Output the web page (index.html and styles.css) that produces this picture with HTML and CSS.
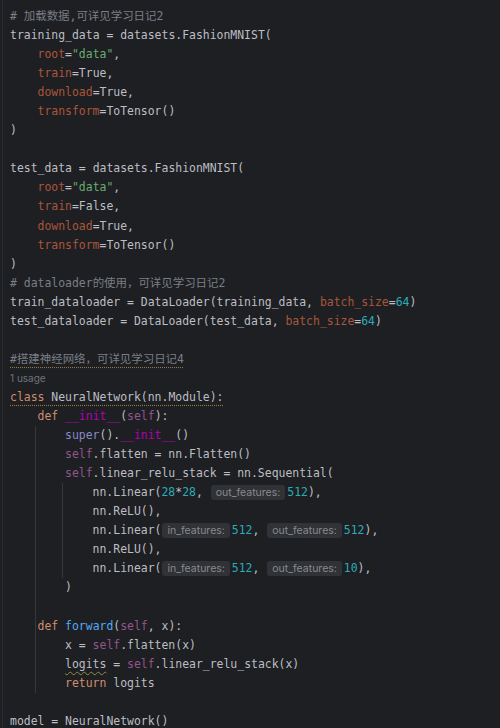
FILE: index.html
```html
<!DOCTYPE html>
<html lang="zh">
<head>
<meta charset="utf-8">
<link rel="stylesheet" href="styles.css">
</head>
<body>
<main class="editor">
<div class="ln"><span class="c"># 加载数据,可详见学习日记2</span></div>
<div class="ln">training_data = datasets.FashionMNIST(</div>
<div class="ln"><span class="i"></span><span class="n">root</span>=<span class="s">"data"</span>,</div>
<div class="ln"><span class="i"></span><span class="n">train</span>=True,</div>
<div class="ln"><span class="i"></span><span class="n">download</span>=True,</div>
<div class="ln"><span class="i"></span><span class="n">transform</span>=ToTensor()</div>
<div class="ln">)</div>
<div class="ln"></div>
<div class="ln">test_data = datasets.FashionMNIST(</div>
<div class="ln"><span class="i"></span><span class="n">root</span>=<span class="s">"data"</span>,</div>
<div class="ln"><span class="i"></span><span class="n">train</span>=False,</div>
<div class="ln"><span class="i"></span><span class="n">download</span>=True,</div>
<div class="ln"><span class="i"></span><span class="n">transform</span>=ToTensor()</div>
<div class="ln">)</div>
<div class="ln"><span class="c"># dataloader的使用，可详见学习日记2</span></div>
<div class="ln">train_dataloader = DataLoader(training_data, <span class="n">batch_size</span>=<span class="num">64</span>)</div>
<div class="ln">test_dataloader = DataLoader(test_data, <span class="n">batch_size</span>=<span class="num">64</span>)</div>
<div class="ln"></div>
<div class="ln"><span class="c warn">#搭建神经网络，可详见学习日记4</span></div>
<div class="ln usage">1 usage</div>
<div class="ln"><span class="warn"><span class="k">class</span> NeuralNetwork(nn.Module):</span></div>
<div class="ln"><span class="i"></span><span class="k">def</span> <span class="m">__init__</span>(<span class="sf">self</span>):</div>
<div class="ln"><span class="i g"></span><span class="i"></span><span class="b">super</span>().<span class="m">__init__</span>()</div>
<div class="ln"><span class="i g"></span><span class="i"></span><span class="sf">self</span>.flatten = nn.Flatten()</div>
<div class="ln"><span class="i g"></span><span class="i"></span><span class="sf">self</span>.linear_relu_stack = nn.Sequential(</div>
<div class="ln"><span class="i g"></span><span class="i g"></span><span class="i"></span>nn.Linear(<span class="num">28</span>*<span class="num">28</span>, <span class="h">out_features:</span><span class="num">512</span>),</div>
<div class="ln"><span class="i g"></span><span class="i g"></span><span class="i"></span>nn.ReLU(),</div>
<div class="ln"><span class="i g"></span><span class="i g"></span><span class="i"></span>nn.Linear(<span class="h">in_features:</span><span class="num">512</span>, <span class="h">out_features:</span><span class="num">512</span>),</div>
<div class="ln"><span class="i g"></span><span class="i g"></span><span class="i"></span>nn.ReLU(),</div>
<div class="ln"><span class="i g"></span><span class="i g"></span><span class="i"></span>nn.Linear(<span class="h">in_features:</span><span class="num">512</span>, <span class="h">out_features:</span><span class="num">10</span>),</div>
<div class="ln"><span class="i g"></span><span class="i"></span>)</div>
<div class="ln"><span class="i g"></span></div>
<div class="ln"><span class="i g"></span><span class="k">def</span> <span class="fn">forward</span>(<span class="sf">self</span>, x):</div>
<div class="ln"><span class="i g"></span><span class="i"></span>x = <span class="sf">self</span>.flatten(x)</div>
<div class="ln"><span class="i g"></span><span class="i"></span><span class="wavy">logits</span> = <span class="sf">self</span>.linear_relu_stack(x)</div>
<div class="ln"><span class="i g"></span><span class="i"></span><span class="k">return</span> logits</div>
<div class="ln"></div>
<div class="ln"><span class="warn">model = NeuralNetwork()</span></div>
</main>
</body>
</html>
```

FILE: styles.css
```css
html, body {
  margin: 0;
  background: #1e1f22;
}

.editor {
  height: 728px;
  box-sizing: border-box;
  margin-left: 2px;
  padding: 7px 0 0 7px;
  border-left: 1px solid #2a2b2e;
  font-family: "DejaVu Sans Mono", "Noto Sans CJK SC", monospace;
  font-size: 11.45px;
  line-height: 19.06px;
  color: #bcbec4;
  overflow: hidden;
}

.ln {
  height: 19.06px;
  white-space: pre;
}

.i {
  display: inline-block;
  width: 4ch;
  height: 19.06px;
  vertical-align: top;
}

.g {
  background: linear-gradient(#36383c, #36383c) no-repeat;
  background-size: 1px 100%;
  background-position: calc(100% - 2px) 0;
}

.c { color: #7a7e85; }
.k { color: #cf8e6d; }
.n { color: #aa563a; }
.s { color: #6aab73; }
.num { color: #2aacb8; }
.sf { color: #94558d; }
.m { color: #b200b2; }
.b { color: #8888c6; }
.fn { color: #56a8f5; }

.warn {
  text-decoration: underline dotted #8f7b4a;
  text-underline-offset: 4px;
}

.wavy {
  text-decoration: underline wavy #8d8f45;
  text-decoration-thickness: 1px;
  text-underline-offset: 3px;
}

.usage {
  font-family: Inter, "Noto Sans", sans-serif;
  font-size: 10px;
  color: #6f737a;
}

.h {
  display: inline-block;
  height: 15px;
  margin: 2px 2px 0 1px;
  padding: 0 5px;
  vertical-align: top;
  border-radius: 3px;
  background: #303236;
  color: #878a90;
  font-family: Inter, "Noto Sans", sans-serif;
  font-size: 10.5px;
  line-height: 15px;
}
```
